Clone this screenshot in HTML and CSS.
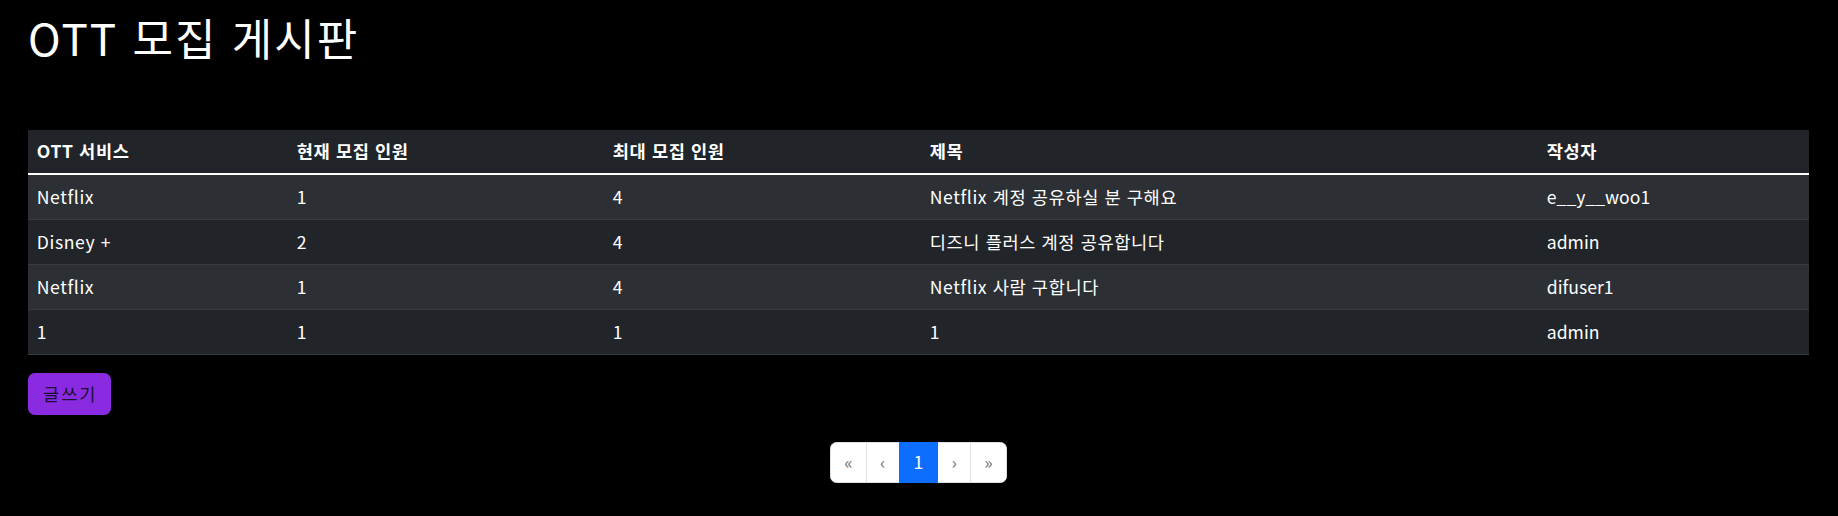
FILE: index.html
```html
<!DOCTYPE html>
<html lang="ko">
<head>
<meta charset="utf-8">
<title>OTT 모집 게시판</title>
<link rel="stylesheet" href="styles.css">
</head>
<body>
<div class="container">
  <h1 class="board-title">OTT 모집 게시판</h1>
  <table class="board-table">
    <thead>
      <tr>
        <th class="col-service">OTT 서비스</th>
        <th class="col-current">현재 모집 인원</th>
        <th class="col-max">최대 모집 인원</th>
        <th class="col-title">제목</th>
        <th class="col-writer">작성자</th>
      </tr>
    </thead>
    <tbody>
      <tr>
        <td>Netflix</td>
        <td>1</td>
        <td>4</td>
        <td>Netflix 계정 공유하실 분 구해요</td>
        <td class="writer">e__y__woo1</td>
      </tr>
      <tr>
        <td>Disney +</td>
        <td>2</td>
        <td>4</td>
        <td>디즈니 플러스 계정 공유합니다</td>
        <td class="writer">admin</td>
      </tr>
      <tr>
        <td>Netflix</td>
        <td>1</td>
        <td>4</td>
        <td>Netflix 사람 구합니다</td>
        <td class="writer">difuser1</td>
      </tr>
      <tr>
        <td>1</td>
        <td>1</td>
        <td>1</td>
        <td>1</td>
        <td class="writer">admin</td>
      </tr>
    </tbody>
  </table>
  <div class="actions">
    <button class="btn-write" type="button">글쓰기</button>
  </div>
  <nav class="pager">
    <ul class="pagination">
      <li class="page-item disabled"><span class="page-link first">«</span></li>
      <li class="page-item disabled"><span class="page-link">‹</span></li>
      <li class="page-item active"><span class="page-link">1</span></li>
      <li class="page-item disabled"><span class="page-link">›</span></li>
      <li class="page-item disabled"><span class="page-link last">»</span></li>
    </ul>
  </nav>
</div>
</body>
</html>
```

FILE: styles.css
```css
* {
  box-sizing: border-box;
}

html, body {
  margin: 0;
  padding: 0;
  background: #000;
}

body {
  color: #fff;
  font-family: "Noto Sans CJK KR", "Noto Sans", sans-serif;
  font-size: 17.6px;
  line-height: 1.5;
}

.container {
  padding: 11px 29px 0 28px;
}

.board-title {
  margin: 0 0 66px 0;
  font-size: 44px;
  font-weight: 400;
  line-height: 1.2;
  letter-spacing: 2px;
  color: #fff;
}

.board-table {
  width: 100%;
  border-collapse: collapse;
  margin-bottom: 18px;
  color: #fff;
  letter-spacing: 0.6px;
}

.board-table th {
  text-align: left;
  font-weight: 700;
  padding: 8px 8.8px 8.8px;
  background: #212529;
  border-bottom: 2px solid #fff;
}

.board-table td {
  padding: 8.8px;
  border-bottom: 1px solid #373b3e;
  background: #212529;
}

.board-table td.writer {
  letter-spacing: 0;
}

.board-table tbody tr:nth-child(odd) td {
  background: #2c3034;
}

.col-service { width: 260px; }
.col-current { width: 316px; }
.col-max { width: 317px; }
.col-title { width: 617px; }
.col-writer { width: auto; }

.actions {
  display: flex;
}

.btn-write {
  font-family: inherit;
  font-size: 17.6px;
  line-height: 26.4px;
  letter-spacing: 2px;
  padding: 6.6px 12px 6.6px 14px;
  background: #8a2be2;
  color: #1a1030;
  border: 1px solid #8a2be2;
  border-radius: 6.6px;
  cursor: pointer;
}

.pager {
  margin-top: 27px;
}

.pagination {
  display: flex;
  justify-content: center;
  list-style: none;
  margin: 0;
  padding: 0;
}

.page-link {
  display: block;
  padding: 6.6px 13.2px;
  font-size: 17.6px;
  line-height: 26.4px;
  background: #fff;
  border: 1px solid #dee2e6;
  margin-left: -1px;
  color: #6c757d;
}

.page-link.first {
  margin-left: 0;
  border-radius: 6.6px 0 0 6.6px;
}

.page-link.last {
  border-radius: 0 6.6px 6.6px 0;
}

.page-item.active .page-link {
  background: #0d6efd;
  border-color: #0d6efd;
  color: #fff;
  padding: 6.6px 14px;
  position: relative;
  z-index: 1;
}
```
